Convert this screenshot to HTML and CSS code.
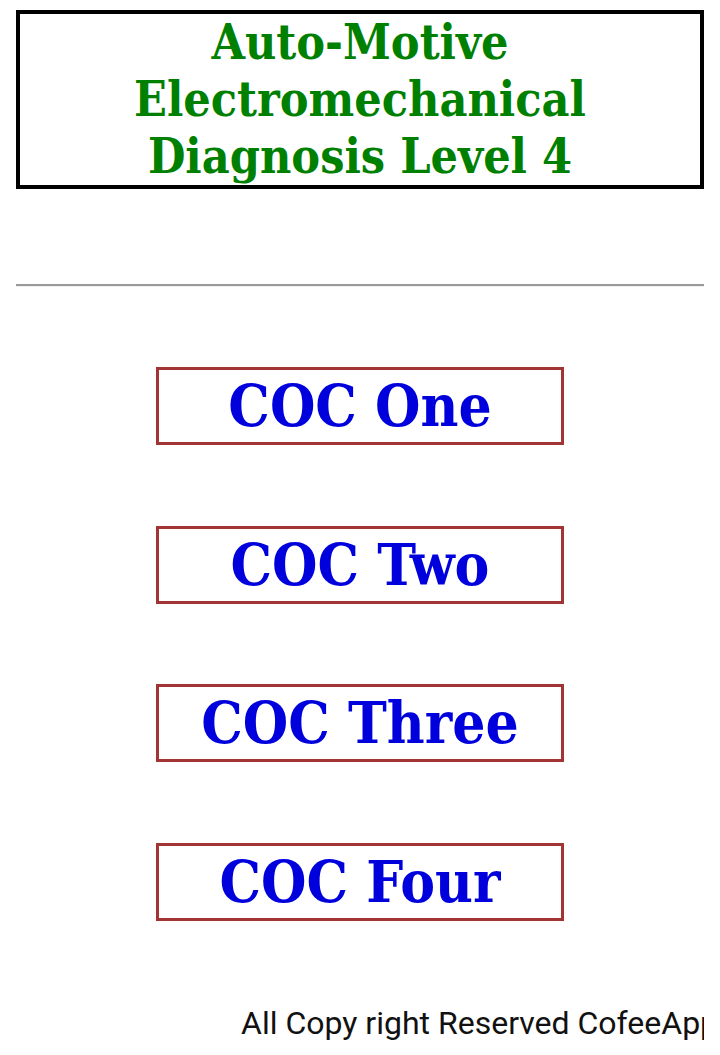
FILE: index.html
```html
<!DOCTYPE html>
<html>
<head>
<meta charset="utf-8">
<link rel="stylesheet" href="styles.css">
</head>
<body>
<div class="page">
  <header class="title-box">
    <h1 class="title">Auto-Motive Electromechanical Diagnosis Level 4</h1>
  </header>
  <hr class="divider">
  <nav class="menu">
    <a class="coc-btn" href="#">COC One</a>
    <a class="coc-btn" href="#">COC Two</a>
    <a class="coc-btn" href="#">COC Three</a>
    <a class="coc-btn" href="#">COC Four</a>
  </nav>
  <footer class="footer">All Copy right Reserved CofeeApps</footer>
</div>
</body>
</html>
```

FILE: styles.css
```css
html, body {
  margin: 0;
  padding: 0;
  background: #ffffff;
}
.page {
  width: 720px;
  height: 1055px;
  overflow: hidden;
  padding: 10px 16px 0 16px;
  box-sizing: border-box;
}
.title-box {
  border: 4px solid #000;
  height: 179px;
  box-sizing: border-box;
  display: flex;
  justify-content: center;
  align-items: flex-start;
  padding-top: 0;
}
.title {
  margin: 0;
  width: 520px;
  text-align: center;
  font-family: "DejaVu Serif Condensed", "DejaVu Serif", serif;
  font-weight: bold;
  font-size: 48px;
  line-height: 57px;
  color: #008000;
}
.divider {
  margin: 95px 0 0 0;
  border: 0;
  height: 2px;
  background: #9a9a9a;
  border-bottom: 1px solid #eeeeee;
}
.menu {
  display: flex;
  flex-direction: column;
  align-items: center;
  gap: 80.6px;
  margin-top: 80px;
}
.coc-btn {
  display: flex;
  justify-content: center;
  align-items: center;
  width: 408px;
  height: 78px;
  box-sizing: border-box;
  border: 3px solid #a33434;
  text-decoration: none;
  font-family: "DejaVu Serif Condensed", "DejaVu Serif", serif;
  font-weight: bold;
  font-size: 58px;
  color: #0000dd;
}
.footer {
  margin-top: 83px;
  padding-left: 225px;
  white-space: nowrap;
  overflow: hidden;
  font-family: Roboto, "Noto Sans", sans-serif;
  font-size: 32px;
  color: #111;
}
```
